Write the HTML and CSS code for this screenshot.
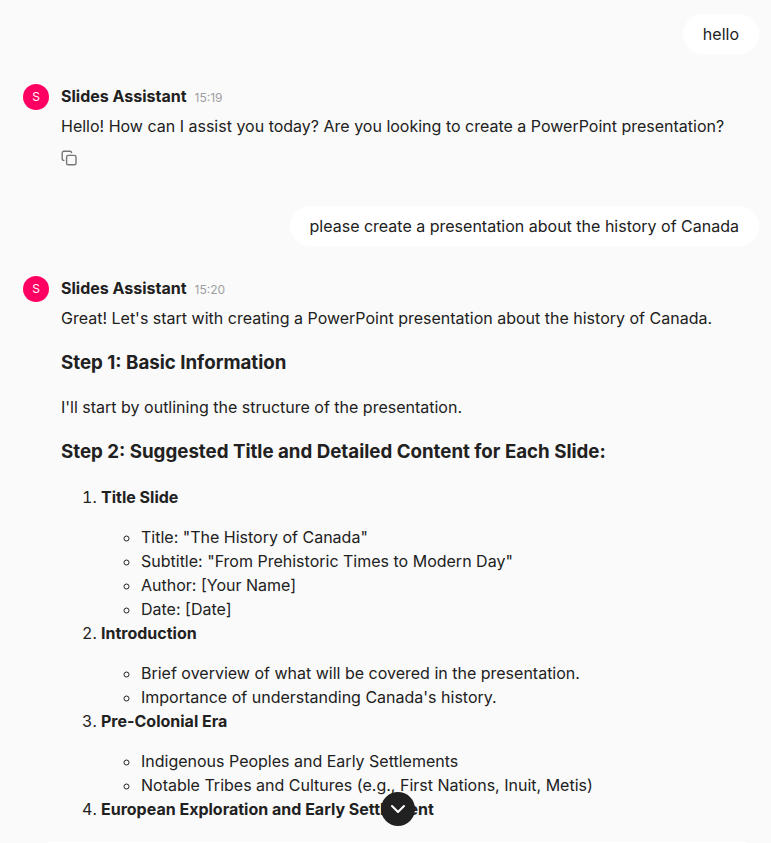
FILE: index.html
```html
<!DOCTYPE html>
<html lang="en">
<head>
<meta charset="utf-8">
<title>Slides Assistant</title>
<link rel="stylesheet" href="styles.css">
</head>
<body>
<main class="chat">
  <div class="user-row"><p class="bubble">hello</p></div>

  <article class="message">
    <div class="avatar">S</div>
    <div class="content">
      <header class="meta"><span class="name">Slides Assistant</span><time class="time">15:19</time></header>
      <p>Hello! How can I assist you today? Are you looking to create a PowerPoint presentation?</p>
      <button class="copy" type="button" aria-label="Copy">
        <svg width="16" height="16" viewBox="0 0 16 16" fill="none" stroke="currentColor" stroke-width="1.4" stroke-linejoin="round" stroke-linecap="round"><rect x="5.6" y="5.4" width="9.4" height="9.4" rx="1.6"/><path d="M2.9 10.4A1.7 1.7 0 0 1 1.2 8.7V2.9A1.7 1.7 0 0 1 2.9 1.2H9A1.7 1.7 0 0 1 10.6 2.6"/></svg>
      </button>
    </div>
  </article>

  <div class="user-row"><p class="bubble">please create a presentation about the history of Canada</p></div>

  <article class="message">
    <div class="avatar">S</div>
    <div class="content">
      <header class="meta"><span class="name">Slides Assistant</span><time class="time">15:20</time></header>
      <p>Great! Let's start with creating a PowerPoint presentation about the history of Canada.</p>
      <h3>Step 1: Basic Information</h3>
      <p>I'll start by outlining the structure of the presentation.</p>
      <h3>Step 2: Suggested Title and Detailed Content for Each Slide:</h3>
      <ol>
        <li><p><strong>Title Slide</strong></p>
          <ul>
            <li>Title: "The History of Canada"</li>
            <li>Subtitle: "From Prehistoric Times to Modern Day"</li>
            <li>Author: [Your Name]</li>
            <li>Date: [Date]</li>
          </ul>
        </li>
        <li><p><strong>Introduction</strong></p>
          <ul>
            <li>Brief overview of what will be covered in the presentation.</li>
            <li>Importance of understanding Canada's history.</li>
          </ul>
        </li>
        <li><p><strong>Pre-Colonial Era</strong></p>
          <ul>
            <li>Indigenous Peoples and Early Settlements</li>
            <li>Notable Tribes and Cultures (e.g., First Nations, Inuit, Metis)</li>
          </ul>
        </li>
        <li><p><strong>European Exploration and Early Settlement</strong></p></li>
      </ol>
    </div>
  </article>
</main>
<button class="scroll-down" type="button" aria-label="Scroll to bottom">
  <svg width="20" height="20" viewBox="0 0 20 20" fill="none" stroke="currentColor" stroke-width="2" stroke-linecap="round" stroke-linejoin="round"><path d="M4 7l6 6 6-6"/></svg>
</button>
<div class="composer-edge"></div>
</body>
</html>
```
FILE: styles.css
```css
* { box-sizing: border-box; }
body {
  margin: 0;
  background: #fafafa;
  color: #212121;
  font: 16px/24px Inter, "Liberation Sans", sans-serif;
}
p { margin: 0; }
.chat { padding: 14px 12px 0 23px; }
.user-row { display: flex; justify-content: flex-end; }
.bubble {
  padding: 8px 20px;
  border-radius: 20px;
  background: #fff;
}
.message {
  display: flex;
  gap: 12px;
  padding: 30px 0 40px;
}
.message:last-child { padding-bottom: 0; }
.avatar {
  flex: none;
  width: 26px;
  height: 26px;
  border-radius: 50%;
  background: #ff0062;
  color: #fff;
  font-size: 12px;
  line-height: 26px;
  text-align: center;
}
.content { flex: 1; min-width: 0; }
.meta {
  display: flex;
  align-items: baseline;
  gap: 8px;
  margin-bottom: 4px;
}
.name { font-weight: 700; }
.time { color: #9e9e9e; font-size: 12px; }
.copy {
  display: block;
  margin-top: 12px;
  padding: 0;
  border: 0;
  background: none;
  color: #757575;
  line-height: 0;
}
h3 { line-height: 28px; }
ol, ul { margin: 0; padding-left: 40px; }
ol { list-style: decimal; }
ul { margin-top: 16px; list-style: circle; }
.scroll-down {
  position: fixed;
  left: 50%;
  bottom: 17px;
  width: 34px;
  height: 34px;
  margin-left: -5px;
  padding: 7px;
  border: 0;
  border-radius: 50%;
  background: #212121;
  color: #fff;
  line-height: 0;
}
/* Top edge of the message box that sits under the conversation */
.composer-edge {
  position: fixed;
  right: 24px;
  bottom: 0;
  left: 48px;
  height: 1px;
  background: #fff;
}
```
